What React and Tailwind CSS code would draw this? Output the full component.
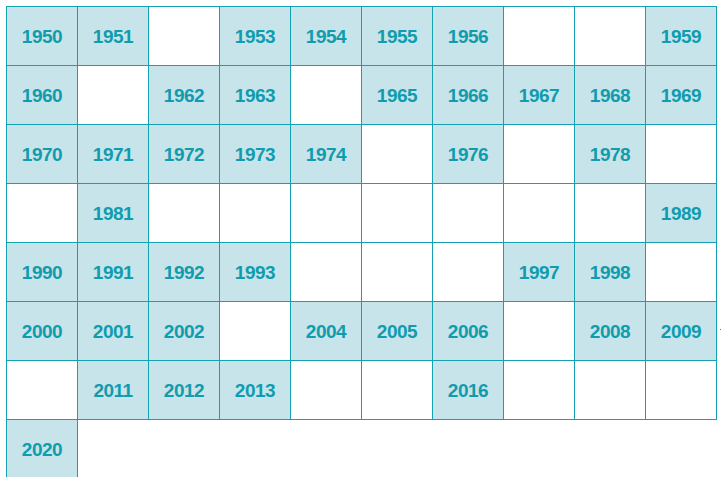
import React from 'react';

const rows = [
    ['1950', '1951', '', '1953', '1954', '1955', '1956', '', '', '1959'],
    ['1960', '', '1962', '1963', '', '1965', '1966', '1967', '1968', '1969'],
    ['1970', '1971', '1972', '1973', '1974', '', '1976', '', '1978', ''],
    ['', '1981', '', '', '', '', '', '', '', '1989'],
    ['1990', '1991', '1992', '1993', '', '', '', '1997', '1998', ''],
    ['2000', '2001', '2002', '', '2004', '2005', '2006', '', '2008', '2009'],
    ['', '2011', '2012', '2013', '', '', '2016', '', '', ''],
    ['2020'],
];

const Cell = ({ year }) => (
    <div
        className={`w-[72px] h-[60px] border border-[#16a1b2] flex items-center justify-center pt-[3px] ${year ? 'bg-[#c6e4ea]' : 'bg-white'}`}
    >
        <span className="text-[19px] font-bold text-[#109cae] tracking-[-0.5px]">{year}</span>
    </div>
);

const App = () => {
    return (
        <div className="w-[722px] h-[477px] bg-white overflow-hidden relative font-['Liberation_Sans',Arial,sans-serif]">
            <div className="pt-[6px] pl-[6px] grid grid-cols-[repeat(10,71px)] auto-rows-[59px]">
                {rows.flatMap((row, r) =>
                    row.map((year, c) => <Cell key={`${r}-${c}`} year={year} />)
                )}
            </div>
            <span className="absolute left-[720px] top-[329px] w-px h-px bg-[#16a1b2]" />
        </div>
    );
};

export default App;
